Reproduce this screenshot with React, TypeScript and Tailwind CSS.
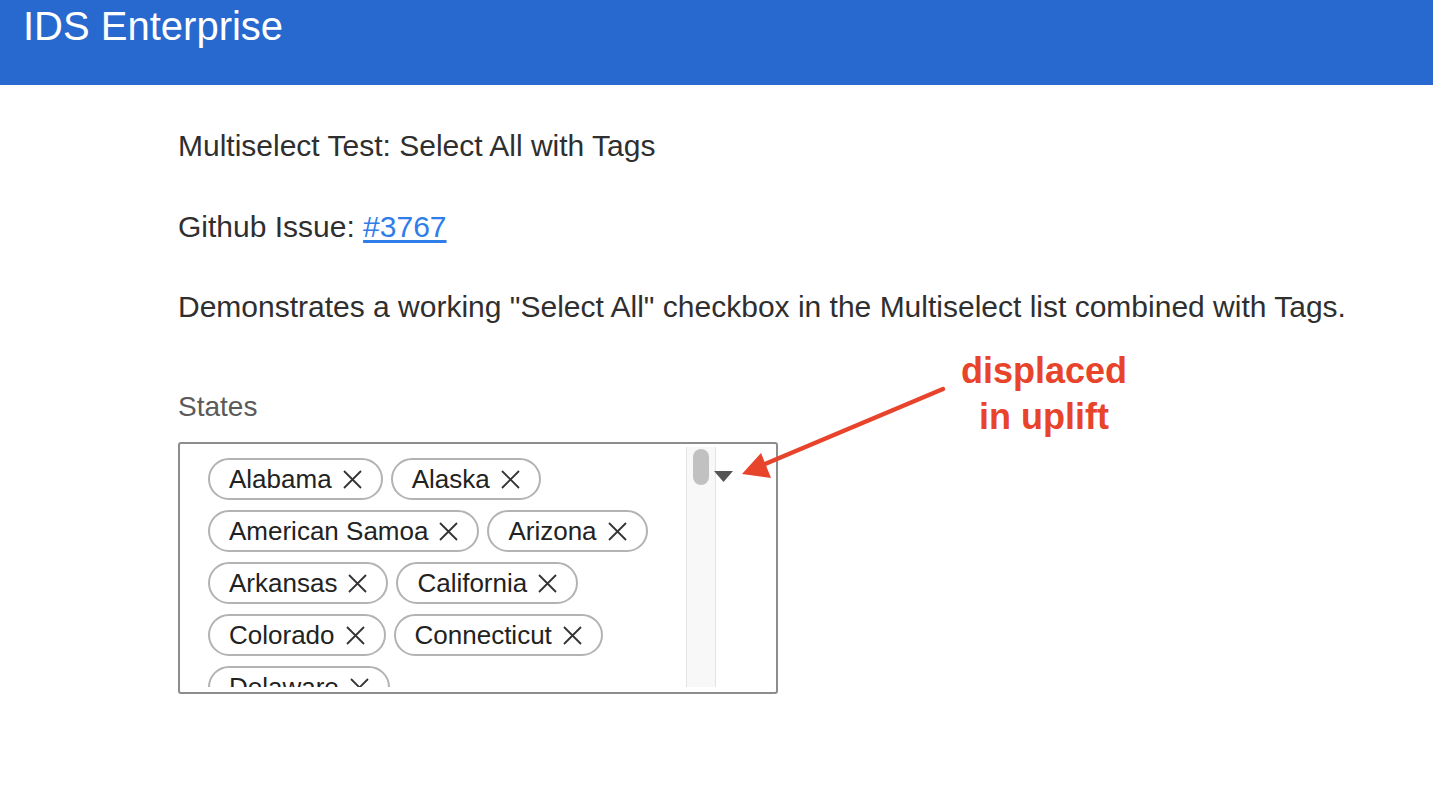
const states = [
  'Alabama',
  'Alaska',
  'American Samoa',
  'Arizona',
  'Arkansas',
  'California',
  'Colorado',
  'Connecticut',
  'Delaware',
];

function CloseIcon() {
  return (
    <svg width="21" height="21" viewBox="0 0 21 21" className="ml-[10px] shrink-0">
      <path d="M2 2 L19 19 M19 2 L2 19" stroke="#333" strokeWidth="1.8" fill="none" />
    </svg>
  );
}

function Tag({ label }: { label: string }) {
  return (
    <div className="flex h-[42px] items-center rounded-full border-2 border-[#b3b3b3] bg-white pl-[19px] pr-[18px] text-[26px] text-[#222]">
      <span>{label}</span>
      <CloseIcon />
    </div>
  );
}

export default function App() {
  return (
    <div
      className="relative min-h-screen bg-white text-[#2f2f2f]"
      style={{ fontFamily: '"Liberation Sans", Arial, sans-serif' }}
    >
      {/* Header */}
      <header className="h-[85px] bg-[#2869cf] pl-[23px]">
        <h1 className="text-[40px] leading-[52px] text-white">IDS Enterprise</h1>
      </header>

      {/* Content */}
      <main className="pl-[178px] pt-[41px] text-[30px] leading-[40px]">
        <p>Multiselect Test: Select All with Tags</p>
        <p className="mt-[41px]">
          Github Issue:{' '}
          <a href="#" className="text-[#2f7de9] underline underline-offset-[3px]">
            #3767
          </a>
        </p>
        <p className="mt-[40px]">
          Demonstrates a working "Select All" checkbox in the Multiselect list combined with Tags.
        </p>

        <label className="mt-[60px] block text-[28px] text-[#5a5a5a]">States</label>

        <div className="mt-[15px] flex h-[252px] w-[600px] rounded-[3px] border-2 border-[#8d8d8d] bg-white">
          <div className="flex flex-1 overflow-hidden pb-[5px] pt-[3px]">
            <div className="flex-1 overflow-hidden pl-[28px] pt-[11px]">
              <div className="flex flex-wrap gap-x-[8px] gap-y-[10px]">
                {states.map((s) => (
                  <Tag key={s} label={s} />
                ))}
              </div>
            </div>
            {/* scrollbar */}
            <div className="flex w-[30px] justify-center border-x border-[#e4e4e4] bg-[#f8f8f8] pt-[2px]">
              <div className="h-[36px] w-[16px] rounded-full bg-[#c1c1c1]" />
            </div>
          </div>
          <div className="w-[60px] pt-[27px]">
            <svg width="19" height="11" viewBox="0 0 19 11" className="-ml-[2px]">
              <polygon points="0,0 19,0 9.5,11" fill="#555" />
            </svg>
          </div>
        </div>
      </main>

      {/* Annotation */}
      <svg
        className="pointer-events-none absolute left-0 top-0"
        width="1433"
        height="797"
        viewBox="0 0 1433 797"
      >
        <line x1="943" y1="389" x2="765" y2="464" stroke="#e8432b" strokeWidth="4.5" strokeLinecap="round" />
        <polygon points="742,474 761,453 771,478" fill="#e8432b" />
      </svg>
      <div className="absolute left-[944px] top-[348px] w-[200px] text-center text-[36px] font-bold leading-[46px] text-[#e8432b]">
        displaced
        <br />
        in uplift
      </div>
    </div>
  );
}
